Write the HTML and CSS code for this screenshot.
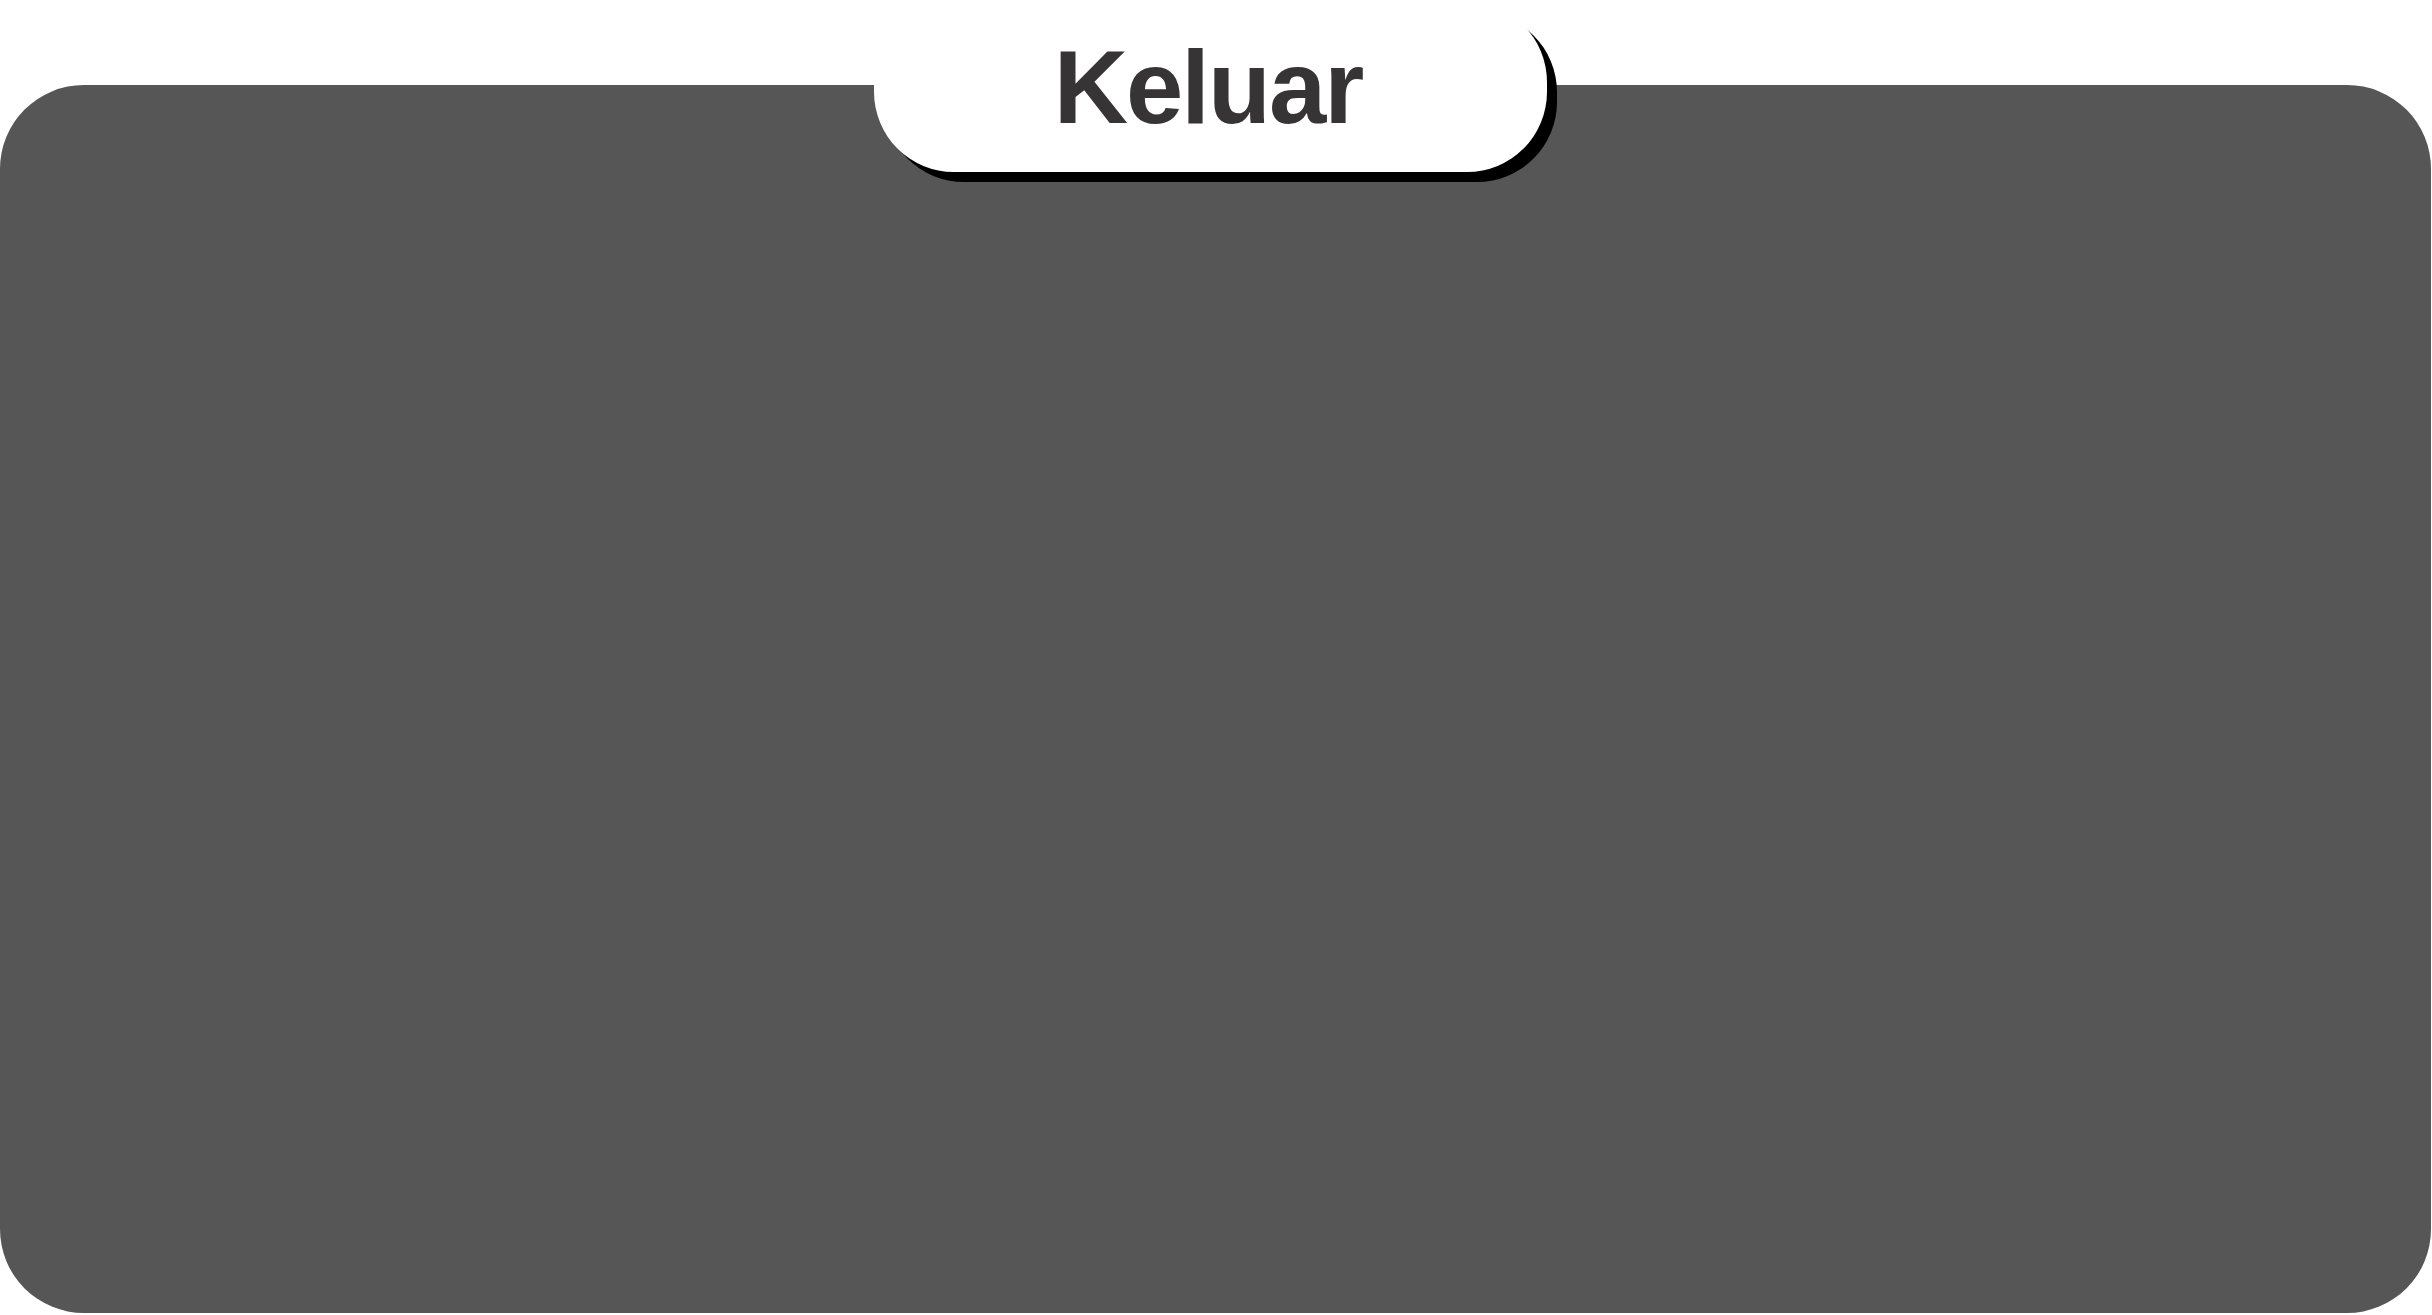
FILE: index.html
```html
<!DOCTYPE html>
<html>
<head>
  <meta name="viewport" content="width=device-width, initial-scale=1">
  <meta charset="UTF-8">
  <link rel="stylesheet" href="styles.css">
</head>
<body>
  <div class="page">
    <div class="panel">
      <div class="tab">
        <h1 class="tab-title">Keluar</h1>
      </div>
    </div>
  </div>
</body>
</html>
```

FILE: styles.css
```css
html, body {
  height: 100%;
  margin: 0;
  padding: 0;
  background-color: #FFFFFF;
}

.page {
  display: flex;
  flex-direction: column;
  height: 100%;
  padding-top: 85px;
  box-sizing: border-box;
}

.panel {
  position: relative;
  width: 2431px;
  height: 1228px;
  background-color: #565656;
  border-radius: 84px;
}

.tab {
  position: absolute;
  top: -83px;
  left: calc(50% - 342px);
  width: 673px;
  height: 170px;
  background-color: #FFFFFF;
  border-radius: 80px;
  box-shadow: 10px 10px 0 #000000;
  display: flex;
  align-items: center;
  justify-content: center;
}

.tab-title {
  margin: 0;
  font-family: "Liberation Sans", Arial, sans-serif;
  font-weight: bold;
  font-size: 103px;
  letter-spacing: -2px;
  line-height: 1;
  color: #363435;
  padding-right: 4px;
}
```
